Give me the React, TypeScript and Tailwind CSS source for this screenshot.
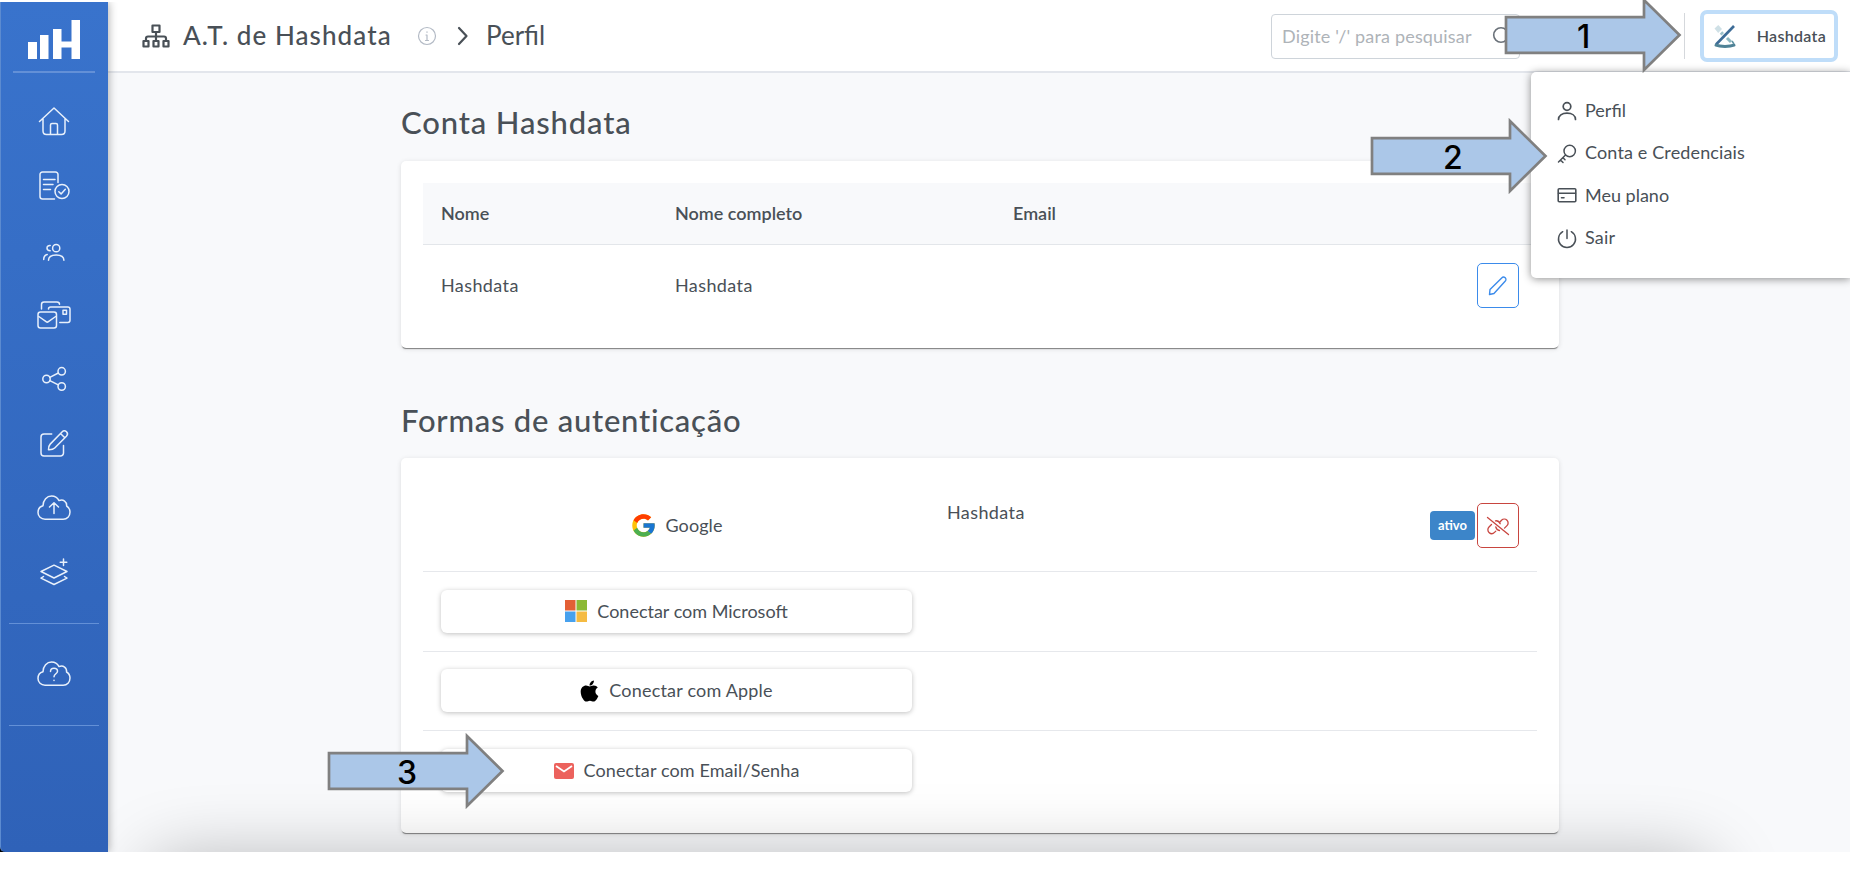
import React from 'react';
import { FcGoogle } from 'react-icons/fc';
import { FaApple } from 'react-icons/fa';

type SvgProps = { w: number; h: number; sw?: number; className?: string; children: React.ReactNode };

function Svg({ w, h, sw = 1.5, className = '', children }: SvgProps) {
  return (
    <svg
      width={w}
      height={h}
      viewBox={`0 0 ${w} ${h}`}
      fill="none"
      stroke="currentColor"
      strokeWidth={sw}
      strokeLinecap="round"
      strokeLinejoin="round"
      className={`shrink-0 ${className}`}
    >
      {children}
    </svg>
  );
}

const cloud = 'M8 24.2C4 24.2 1 21.3 1 17.4c0-3.200 2-5.900 5-6.700C6.200 5 9.800 1 14.600 1c3.300 0 5.800 1.700 7.400 4.600 4.300-1.700 8 1.100 7.600 5.400 2 1.200 3.400 3.600 3.400 6.100 0 4.200-2.900 7.100-6.800 7.100z';

const navIcons = [
  <Svg w={34} h={34}>
    <path d="M2.500 16.500 17 3l14.500 13.500M6 13.500V26c0 2 1.500 3.500 3.500 3.500h15c2 0 3.500-1.500 3.500-3.500V13.500M13.500 29.500V20c0-1 .7-1.500 1.500-1.500h4c.8 0 1.500.5 1.500 1.500v9.500" />
  </Svg>,
  <Svg w={34} h={34}>
    <path d="M17.500 30H5.500A2.500 2.500 0 0 1 3 27.500v-22A2.500 2.500 0 0 1 5.500 3h13A2.500 2.500 0 0 1 21 5.500v8M6.500 10.500H18M6.500 15.500H16M6.500 20.500h7" />
    <circle cx="25" cy="22.500" r="7" />
    <path d="m21.800 22.700 2.300 2.200 4.200-4.600" />
  </Svg>,
  <Svg w={34} h={34}>
    <circle cx="19.200" cy="14.200" r="3.600" />
    <path d="M11.500 26.300c0-3.400 3-5.300 7.700-5.300s7.700 1.900 7.700 5.300M13.200 16.800c-2 0-3.200-1.100-3.200-2.700s1.300-2.800 3.200-2.600M6.700 25.500c0-2.800 1-4.400 3.500-5" />
  </Svg>,
  <Svg w={36} h={34}>
    <path d="M5.500 11V6.500C5.500 5 6.500 4 8 4h13c1.500 0 2.500 1 2.500 2.300M12.500 11c0-1.200 1-2 2.200-2h17.100c1.300 0 2.200.9 2.200 2.200v11c0 1.300-.9 2.200-2.200 2.200h-8" />
    <rect x="2" y="14" width="18.500" height="16" rx="2.500" />
    <path d="m2.800 18.500 7.300 5.200c.8.600 1.500.6 2.300 0l7.300-5.200M27 12.300h3.500v4H27z" />
  </Svg>,
  <Svg w={34} h={34}>
    <circle cx="9.500" cy="17" r="3.700" />
    <circle cx="24.700" cy="9.300" r="3.700" />
    <circle cx="24.700" cy="24.500" r="3.700" />
    <path d="m12.800 15.300 8.500-4.300M12.800 18.700l8.500 4.200" />
  </Svg>,
  <Svg w={34} h={34}>
    <path d="M14.700 7H7a3 3 0 0 0-3 3v16a3 3 0 0 0 3 3h16.500a3 3 0 0 0 3-3v-7.500" />
    <path d="M11.500 22.700c0-2.500.3-4.200 1.700-5.600L25 4.900c1.400-1.400 3.300-1.300 4.500-.1s1.200 3.100-.1 4.500L17.700 21c-1.500 1.500-3.500 1.800-6.200 1.700zM23.500 6.500l4.300 4.300" />
  </Svg>,
  <Svg w={34} h={25}>
    <path d={cloud} />
    <path d="M17 18.500V8M12.500 12 17 7.700l4.500 4.300" />
  </Svg>,
  <Svg w={34} h={34}>
    <path d="m4 16.500 13-6.300 13 6.300L17 23zM6.500 21.500 4 23.200l13 6.300 13-6.300-2.500-1.700M26.500 4v6.500M23.200 7.200h6.600" />
  </Svg>,
];

function Logo() {
  return (
    <svg width="52" height="39" viewBox="0 0 52 39" fill="#fff">
      <path d="M0 22h9v17H0zM12 15h8.500v24H12zM25 9h8.500v12.500h10V0H52v39h-8.500V27.500h-10V39H25z" />
    </svg>
  );
}

function Arrow({ label, className, textClass }: { label: string; className: string; textClass: string }) {
  return (
    <div className={`absolute z-30 h-[76px] w-[178px] ${className}`}>
      <svg width="178" height="76" viewBox="0 0 178 76" className="block">
        <path
          d="M2 20.200H140V3L175.500 38 140 73V55.800H2z"
          fill="#abc7e8"
          stroke="#808080"
          strokeWidth="2.700"
          strokeMiterlimit="10"
        />
      </svg>
      <span className={`absolute top-[20px] font-[Inter,sans-serif] text-[32px] leading-[40px] font-medium text-black ${textClass}`}>
        {label}
      </span>
    </div>
  );
}

function Sidebar() {
  return (
    <aside className="relative z-10 flex w-[108px] shrink-0 flex-col items-center rounded-bl-[5px] border-l border-[#5c8bd0] bg-linear-to-b from-[#3973cc] to-[#2f62b8] pt-[18px] pr-px text-[#e8f0fb] shadow-[1px_0_8px_rgba(0,0,0,0.3)]">
      <Logo />
      <div className="mt-[12px] h-[2px] w-[82px] bg-[#6390d7]" />
      <nav className="mt-[17px] flex flex-col">
        {navIcons.map((icon, i) => (
          <a key={i} className="flex h-[64.300px] items-center justify-center">
            {icon}
          </a>
        ))}
      </nav>
      <div className="mt-[19px] h-px w-[90px] bg-[#6390d7]" />
      <a className="flex h-[101px] items-center pb-[2px]">
        <Svg w={34} h={25}>
          <path d={cloud} />
          <path d="M13.500 10.500c0-2 1.400-3.200 3.500-3.200s3.500 1.200 3.500 3c0 2.500-3.500 2.500-3.500 5.500M17 19.300v.3" />
        </Svg>
      </a>
      <div className="h-px w-[90px] bg-[#6390d7]" />
    </aside>
  );
}

function Avatar() {
  return (
    <svg width="24" height="25" viewBox="0 0 24 25" fill="none" className="shrink-0">
      <path d="m1.500 4.500 3.800-3.500 3.700 4-3.800 4z" fill="#cfe0e6" />
      <path d="m8 8.500 4 4" stroke="#9fc3cc" strokeWidth="3.500" strokeDasharray="2.500 1" />
      <path d="m14 14 4 4" stroke="#8db8c2" strokeWidth="3" />
      <path d="M21 2 3 20.500" stroke="#3d6c97" strokeWidth="2.600" />
      <path d="M3 21.200c4 1.600 14 1.600 18 0" stroke="#4f8296" strokeWidth="3" strokeLinecap="round" />
      <path d="m19 17 2 3" stroke="#5f93a3" strokeWidth="1.500" />
    </svg>
  );
}

function Header() {
  return (
    <header className="flex h-[71px] shrink-0 items-center border-b-2 border-[#e3e6ec] bg-white pr-[12px] pb-px pl-[33px]">
      <Svg w={30} h={26} sw={2.200} className="-mt-px">
        <path d="M11.500 2.500h7v6.500h-7zM2.500 18h5v5.500h-5zM12.500 18h5v5.500h-5zM22.500 18h5v5.500h-5zM15 9v9M5 18v-2.500c0-1.300.8-2 2-2h16c1.200 0 2 .7 2 2V18" />
      </Svg>
      <h1 className="mb-[3px] ml-[12px] w-[209px] text-[26px] leading-[36px] font-medium tracking-[1.080px] whitespace-nowrap">A.T. de Hashdata</h1>
      <Svg w={20} h={20} sw={1.200} className="ml-[25px] text-[#b3bac5]">
        <circle cx="10" cy="10" r="8.500" />
        <path d="M10 9v5.500M10 5.800v.5M9 9h1M8.500 14.500h3" />
      </Svg>
      <Svg w={14} h={20} sw={2.200} className="ml-[19px]">
        <path d="m3 2 7.500 8L3 18" />
      </Svg>
      <span className="mb-[3px] ml-[16px] text-[26px] leading-[36px]">Perfil</span>
      <div className="mr-[164px] ml-auto flex h-[45px] w-[249px] items-center rounded-[4px] border-[1.500px] border-[#ced4da] pr-[5px] pl-[10px]">
        <span className="text-[18px] tracking-[0.170px] whitespace-nowrap text-[#aeb3b8]">Digite '/' para pesquisar</span>
        <Svg w={22} h={20} sw={1.600} className="ml-auto text-[#6b727a]">
          <circle cx="9" cy="9" r="7.300" />
          <path d="m15 15 4 4" />
        </Svg>
      </div>
      <div className="h-[46px] w-px bg-[#d5d8dc]" />
      <button className="ml-[15px] flex h-[52px] w-[138px] items-center rounded-[7px] border-[4px] border-[#bfddf9] pr-[8px] pl-[9px]">
        <Avatar />
        <span className="mb-px ml-auto text-[16px] font-semibold tracking-[0.300px]">Hashdata</span>
      </button>
    </header>
  );
}

const menuItems = [
  {
    label: 'Perfil',
    cls: '',
    icon: (
      <Svg w={20} h={20} sw={1.700}>
        <circle cx="10" cy="5.500" r="3.800" />
        <path d="M1.500 18.500c0-4 3.500-6.300 8.500-6.300s8.500 2.300 8.500 6.300" />
      </Svg>
    ),
  },
  {
    label: 'Conta e Credenciais',
    cls: 'tracking-[0.140px]',
    icon: (
      <Svg w={20} h={20} sw={1.500}>
        <circle cx="12.700" cy="7" r="5.700" />
        <path d="m8.500 11-7 7M3.500 16l2.500 2.500M6 13.700l2 2" />
      </Svg>
    ),
  },
  {
    label: 'Meu plano',
    cls: '',
    icon: (
      <Svg w={20} h={20} sw={1.600}>
        <rect x="1.200" y="2.700" width="17.600" height="13" rx="1" />
        <path d="M1.500 7.300h17M4.500 11.800h2.500" />
      </Svg>
    ),
  },
  {
    label: 'Sair',
    cls: 'tracking-[0.200px]',
    icon: (
      <Svg w={20} h={20} sw={1.500}>
        <path d="M10 1v8.500M5.700 2.700A8.500 8.500 0 1 0 14.300 2.700" />
      </Svg>
    ),
  },
];

function UserMenu() {
  return (
    <div className="absolute top-[72px] right-0 z-20 h-[206px] w-[319px] rounded-l-[5px] bg-white pt-[18px] pl-[26px] shadow-[0_1px_8px_rgba(0,0,0,0.45)]">
      {menuItems.map((m) => (
        <a key={m.label} className="flex h-[42.500px] items-center gap-[8px]">
          {m.icon}
          <span className={`mb-[2px] text-[18px] whitespace-nowrap ${m.cls}`}>{m.label}</span>
        </a>
      ))}
    </div>
  );
}

function ProviderButton({ icon, label, cls }: { icon: React.ReactNode; label: string; cls: string }) {
  return (
    <button className="flex h-[43px] w-[471px] items-center justify-center gap-[10px] rounded-[6px] bg-white shadow-[0_1px_5px_rgba(0,0,0,0.25)]">
      {icon}
      <span className={`text-[18px] whitespace-nowrap ${cls}`}>{label}</span>
    </button>
  );
}

const providers = [
  {
    label: 'Conectar com Microsoft',
    cls: '',
    icon: (
      <svg width="22" height="22" viewBox="0 0 22 22" className="shrink-0">
        <path d="M0 0h10.500v10.500H0z" fill="#e35f35" />
        <path d="M11.500 0H22v10.500H11.500z" fill="#8cb935" />
        <path d="M0 11.500h10.500V22H0z" fill="#47a1ee" />
        <path d="M11.500 11.500H22V22H11.500z" fill="#f5bb42" />
      </svg>
    ),
  },
  { label: 'Conectar com Apple', cls: 'tracking-[0.200px]', icon: <FaApple className="h-[24px] w-[19px] shrink-0 text-black" /> },
  {
    label: 'Conectar com Email/Senha',
    cls: 'tracking-[0.110px]',
    icon: (
      <svg width="20" height="16" viewBox="0 0 20 16" className="shrink-0">
        <rect width="20" height="16" rx="2" fill="#ec625d" />
        <path d="m2 3 8 5.500L18 3" fill="none" stroke="#fff" strokeWidth="1.800" />
      </svg>
    ),
  },
];

const card = 'w-[1158px] rounded-[5px] bg-white px-[22px] shadow-[0_2px_1px_-1px_rgba(0,0,0,0.45),0_1px_5px_rgba(0,0,0,0.12)]';

export default function App() {
  return (
    <div className="relative h-[870px] w-[1850px] overflow-hidden bg-white pt-[2px] font-[Lato,sans-serif] text-[18px] text-[#495057]">
      <div className="relative flex h-[850px] overflow-hidden bg-[#f8f9fb]">
        <div className="absolute bottom-0 left-0 size-[6px] bg-black" />
        <Sidebar />
        <div className="flex min-w-0 flex-1 flex-col">
          <Header />
          <main className="ml-[293px] w-[1158px]">
            <h2 className="mt-[27px] h-[44px] text-[31px] leading-[44px] font-medium tracking-[0.850px]">Conta Hashdata</h2>
            <section className={`mt-[17px] h-[187px] pt-[22px] ${card}`}>
              <div className="grid h-[62px] grid-cols-[234px_338px_1fr] items-center border-b border-[#e3e6ea] bg-[#f8f9fb] pl-[18px] font-semibold">
                <span>Nome</span>
                <span>Nome completo</span>
                <span>Email</span>
              </div>
              <div className="grid h-[81px] grid-cols-[234px_338px_1fr] items-center pr-[18px] pl-[18px]">
                <span className="tracking-[0.400px]">Hashdata</span>
                <span className="tracking-[0.400px]">Hashdata</span>
                <button className="flex h-[45px] w-[42px] items-center justify-center justify-self-end rounded-[5px] border-[1.500px] border-[#3b8beb] text-[#3b8beb]">
                  <Svg w={20} h={20} sw={1.400}>
                    <path d="m1.500 18.500.5-5L13.700 1.900c1.100-1.100 2.500-1 3.500-.1.900.9 1 2.400-.1 3.500L6 17.500z" />
                  </Svg>
                </button>
              </div>
            </section>
            <h2 className="mt-[50px] h-[44px] text-[31px] leading-[44px] font-medium tracking-[0.750px]">Formas de autenticação</h2>
            <section className={`mt-[16px] h-[375px] pt-[22px] ${card}`}>
              <div className="grid h-[92px] grid-cols-[506px_1fr_auto] items-center border-b border-[#e6e8ec] px-[18px]">
                <div className="flex w-[471px] items-center justify-center gap-[8px]">
                  <FcGoogle className="size-[27px]" />
                  <span className="tracking-[0.100px]">Google</span>
                </div>
                <span className="-mt-[27px] tracking-[0.400px]">Hashdata</span>
                <div className="flex items-center gap-[2px]">
                  <span className="flex h-[29px] w-[45px] items-center justify-center rounded-[4px] bg-[#3c85c9] text-[13px] font-bold text-white">ativo</span>
                  <button className="flex h-[45px] w-[42px] items-center justify-center rounded-[5px] border-[1.500px] border-[#c8453f] text-[#c8453f]">
                    <Svg w={24} h={20} sw={1.300}>
                      <path d="M1.500 1.500 22.500 18.500M14 6l1.500-1.700c1.600-1.600 4-1.600 5.500-.1s1.500 3.900 0 5.400l-2.500 2.500M13.500 14.500c-1.800-.2-3.200-1.500-3.700-3.500M5.500 8.500 3 11c-1.500 1.500-1.500 4 0 5.400 1.600 1.500 4 1.500 5.500 0l1.300-1.300M9.500 4.800c2-.3 3.800.9 4.700 2.900" />
                    </Svg>
                  </button>
                </div>
              </div>
              {providers.map((p, i) => (
                <div key={p.label} className={`flex h-[79.500px] items-center pl-[18px] ${i < 2 ? 'border-b border-[#e6e8ec]' : ''}`}>
                  <ProviderButton {...p} />
                </div>
              ))}
            </section>
          </main>
        </div>
        <div className="pointer-events-none absolute top-[870px] left-[160px] h-[100px] w-[1540px] rounded-[20px] shadow-[0_0_70px_14px_rgba(0,0,0,0.27)]" />
      </div>
      <UserMenu />
      <Arrow label="1" className="-top-[3px] left-[1504px]" textClass="left-[73px]" />
      <Arrow label="2" className="top-[118px] left-[1370px]" textClass="left-[73px]" />
      <Arrow label="3" className="top-[733px] left-[327px]" textClass="left-[70px]" />
    </div>
  );
}
